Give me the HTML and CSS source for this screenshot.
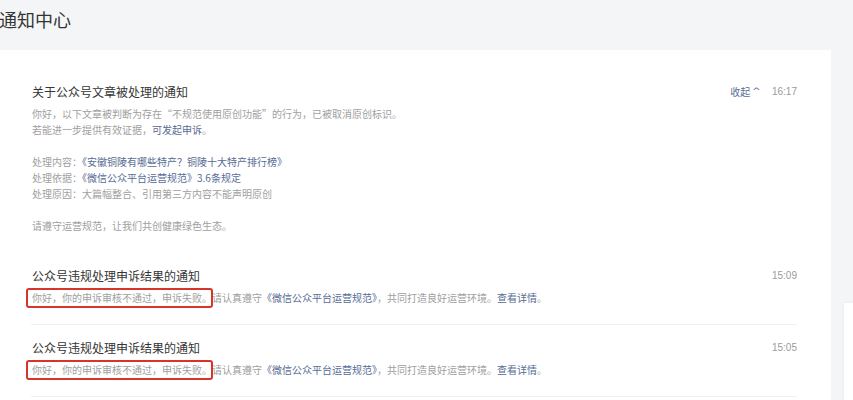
FILE: index.html
```html
<!DOCTYPE html>
<html lang="zh-CN">
<head>
<meta charset="utf-8">
<title>通知中心</title>
<link rel="stylesheet" href="styles.css">
</head>
<body>
<header class="page-head"><h1 class="page-title">通知中心</h1></header>
<main class="card">
  <section class="item item--first">
    <div class="item-head">
      <h2 class="item-title">关于公众号文章被处理的通知</h2>
      <div class="item-meta"><a class="link toggle">收起<span class="caret">^</span></a><span class="time">16:17</span></div>
    </div>
    <div class="item-body">
      <p>你好，以下文章被判断为存在“不规范使用原创功能”的行为，已被取消原创标识。<br>若能进一步提供有效证据，<a class="link">可发起申诉</a>。</p>
      <p>处理内容：<a class="link">《安徽铜陵有哪些特产？铜陵十大特产排行榜》</a><br>处理依据：<a class="link">《微信公众平台运营规范》3.6条规定</a><br>处理原因：大篇幅整合、引用第三方内容不能声明原创</p>
      <p>请遵守运营规范，让我们共创健康绿色生态。</p>
    </div>
  </section>
  <section class="item">
    <div class="item-head">
      <h2 class="item-title">公众号违规处理申诉结果的通知</h2>
      <div class="item-meta"><span class="time">15:09</span></div>
    </div>
    <div class="item-body">
      <p><span class="mark">你好，你的申诉审核不通过，申诉失败。</span>请认真遵守<a class="link">《微信公众平台运营规范》</a>，共同打造良好运营环境。<a class="link">查看详情</a>。</p>
    </div>
  </section>
  <section class="item">
    <div class="item-head">
      <h2 class="item-title">公众号违规处理申诉结果的通知</h2>
      <div class="item-meta"><span class="time">15:05</span></div>
    </div>
    <div class="item-body">
      <p><span class="mark">你好，你的申诉审核不通过，申诉失败。</span>请认真遵守<a class="link">《微信公众平台运营规范》</a>，共同打造良好运营环境。<a class="link">查看详情</a>。</p>
    </div>
  </section>
</main>
<div class="side-panel"></div>
</body>
</html>
```
FILE: styles.css
```css
* { box-sizing: border-box; }
html, body { margin: 0; padding: 0; }
body {
  background: #f4f5f7;
  font-family: "Noto Sans CJK SC", "Noto Sans", sans-serif;
  color: #353535;
  width: 853px;
  height: 400px;
  overflow: hidden;
  position: relative;
}
.page-head {
  height: 50px;
  padding: 7px 0 0 0;
}
.page-title {
  margin: 0 0 0 -1px;
  font-size: 18px;
  line-height: 24px;
  font-weight: 400;
  color: #353535;
}
.card {
  width: 831px;
  height: 350px;
  overflow: hidden;
  background: #fff;
  padding: 19px 34px 0 31px;
}
.item {
  padding: 12px 0 18px 1px;
  border-bottom: 1px solid #efefef;
}
.item--first { border-bottom-color: transparent; }
.item-head {
  display: flex;
  justify-content: space-between;
  align-items: center;
}
.item-title {
  margin: 0;
  font-size: 12px;
  line-height: 22px;
  font-weight: 400;
  color: #353535;
}
.item-meta {
  display: flex;
  align-items: center;
  gap: 12px;
  font-size: 10px;
  line-height: 22px;
}
.time {
  font-family: "Liberation Sans", "Noto Sans", sans-serif;
  color: #9a9a9a;
  font-size: 10px;
}
.toggle { display: flex; align-items: center; }
.caret {
  display: inline-block;
  margin-left: 3px;
  font-family: "DejaVu Sans", sans-serif;
  font-size: 8px;
  transform: scaleX(1.3);
}
.link {
  color: #576b95;
  text-decoration: none;
}
.item-body {
  margin-top: 3px;
  font-size: 10px;
  line-height: 16px;
  color: #a0a0a0;
}
.item-body p { margin: 0 0 16px; }
.item-body p:last-child { margin-bottom: 0; }
.mark {
  position: relative;
  display: inline-block;
  line-height: 16px;
}
.mark::after {
  content: "";
  position: absolute;
  left: -6px;
  right: -1px;
  top: -2px;
  bottom: -2px;
  border: 2px solid #d6352c;
  border-radius: 3px;
}
.side-panel {
  position: absolute;
  left: 844px;
  top: 303px;
  width: 9px;
  height: 97px;
  background: #fff;
  box-shadow: 0 0 4px rgba(0,0,0,0.06);
}
```
